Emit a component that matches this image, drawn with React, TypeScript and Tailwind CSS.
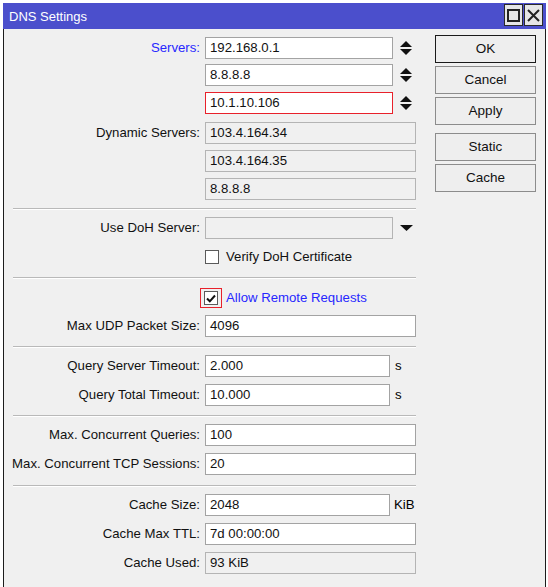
import type { ReactNode } from "react";

type Kind = "edit" | "disabled";

function Box({ value = "", kind = "edit", width, red }: { value?: string; kind?: Kind; width: string; red?: boolean }) {
  const bg = kind === "edit" ? "bg-white" : "bg-[#f0f0f0]";
  const border = red ? "border-[#e8212b]" : kind === "edit" ? "border-[#a3a3a3]" : "border-[#b4b4b4]";
  return (
    <div className={`h-[22px] ${width} ${bg} border ${border} flex items-center pl-[4px] text-[#111] whitespace-nowrap`}>
      {value}
    </div>
  );
}

function Row({ label, blue, top, children }: { label: string; blue?: boolean; top: string; children: ReactNode }) {
  return (
    <div className={`flex items-center h-[22px] ${top}`}>
      <div className={`w-[196px] text-right whitespace-nowrap ${blue ? "text-[#2727ff]" : "text-[#111]"}`}>{label}</div>
      <div className="ml-[5px] flex items-center">{children}</div>
    </div>
  );
}

function Sep({ top }: { top: string }) {
  return <div className={`${top} ml-[9px] w-[403px] h-[2px] border-t border-[#b9b9b9] border-b border-b-white`} />;
}

function Arrows() {
  return (
    <svg className="ml-[7px]" width="12" height="14" viewBox="0 0 12 14">
      <path d="M6 0 L12 6 L0 6 Z" fill="#111" />
      <path d="M0 8 L12 8 L6 14 Z" fill="#111" />
    </svg>
  );
}

function Btn({ label, primary, top }: { label: string; primary?: boolean; top: string }) {
  return (
    <div
      className={`${top} h-[28px] w-[101px] flex items-center justify-center text-[13.5px] text-[#111] bg-[#eeeeee] border ${
        primary ? "border-[#1a1a1a]" : "border-[#8c8c8c]"
      }`}
    >
      {label}
    </div>
  );
}

export default function App() {
  return (
    <div className="w-[548px] h-[587px] overflow-hidden bg-white pt-[3px] pl-[3px] font-['Liberation_Sans',Arial,sans-serif] text-[13.2px] leading-none">
      <div className="w-[543px] h-[600px] bg-[#f0f0f0] border-x border-[#1c1c1c]">
        {/* title bar */}
        <div className="h-[26px] -mx-px bg-[#4b4fcc] flex items-center justify-between pl-[6px] pr-[3px]">
          <span className="text-white text-[13px]">DNS Settings</span>
          <div className="flex gap-[1px] self-start mt-[1px]">
            <div className="w-[19px] h-[22px] bg-[#e6e6e6] border border-[#2a2a2a] flex items-center justify-center">
              <div className="w-[13px] h-[13px] border-2 border-[#222]" />
            </div>
            <div className="w-[19px] h-[22px] bg-[#e6e6e6] border border-[#2a2a2a] flex items-center justify-center">
              <svg width="13" height="13" viewBox="0 0 13 13">
                <path d="M1 1 L12 12 M12 1 L1 12" stroke="#222" strokeWidth="2" />
              </svg>
            </div>
          </div>
        </div>

        <div className="flex">
          <div className="w-[431px] pt-[8px]">
            <Row label="Servers:" blue top="">
              <Box value="192.168.0.1" width="w-[188px]" />
              <Arrows />
            </Row>
            <Row label="" top="mt-[5px]">
              <Box value="8.8.8.8" width="w-[188px]" />
              <Arrows />
            </Row>
            <Row label="" top="mt-[6px]">
              <Box value="10.1.10.106" width="w-[188px]" red />
              <Arrows />
            </Row>
            <Row label="Dynamic Servers:" top="mt-[8px]">
              <Box value="103.4.164.34" kind="disabled" width="w-[211px]" />
            </Row>
            <Row label="" top="mt-[6px]">
              <Box value="103.4.164.35" kind="disabled" width="w-[211px]" />
            </Row>
            <Row label="" top="mt-[6px]">
              <Box value="8.8.8.8" kind="disabled" width="w-[211px]" />
            </Row>

            <Sep top="mt-[8px]" />

            <Row label="Use DoH Server:" top="mt-[7px]">
              <Box kind="disabled" width="w-[188px]" />
              <svg className="ml-[7px]" width="13" height="6" viewBox="0 0 13 6">
                <path d="M0 0 L13 0 L6.5 6 Z" fill="#111" />
              </svg>
            </Row>
            <div className="mt-[11px] h-[13px] flex items-center">
              <div className="ml-[201px] w-[14px] h-[14px] bg-white border border-[#5a5a5a]" />
              <span className="ml-[7px] text-[#111]">Verify DoH Certificate</span>
            </div>

            <Sep top="mt-[14px]" />

            <div className="mt-[9px] h-[20px] flex items-center">
              <div className="ml-[196px] w-[22px] h-[20px] border border-[#e8212b] flex items-center justify-center">
                <div className="w-[14px] h-[14px] bg-white border border-[#5a5a5a] flex items-center justify-center">
                  <svg width="10" height="9" viewBox="0 0 10 9">
                    <path d="M1 4.5 L3.8 7.3 L9 1.5" fill="none" stroke="#111" strokeWidth="2" />
                  </svg>
                </div>
              </div>
              <span className="ml-[4px] text-[#2727ff]">Allow Remote Requests</span>
            </div>
            <Row label="Max UDP Packet Size:" top="mt-[7px]">
              <Box value="4096" width="w-[211px]" />
            </Row>

            <Sep top="mt-[9px]" />

            <Row label="Query Server Timeout:" top="mt-[7px]">
              <Box value="2.000" width="w-[185px]" />
              <span className="ml-[5px]">s</span>
            </Row>
            <Row label="Query Total Timeout:" top="mt-[7px]">
              <Box value="10.000" width="w-[185px]" />
              <span className="ml-[5px]">s</span>
            </Row>

            <Sep top="mt-[9px]" />

            <Row label="Max. Concurrent Queries:" top="mt-[7px]">
              <Box value="100" width="w-[211px]" />
            </Row>
            <Row label="Max. Concurrent TCP Sessions:" top="mt-[7px]">
              <Box value="20" width="w-[211px]" />
            </Row>

            <Sep top="mt-[10px]" />

            <Row label="Cache Size:" top="mt-[7px]">
              <Box value="2048" width="w-[185px]" />
              <span className="ml-[4px]">KiB</span>
            </Row>
            <Row label="Cache Max TTL:" top="mt-[7px]">
              <Box value="7d 00:00:00" width="w-[211px]" />
            </Row>
            <Row label="Cache Used:" top="mt-[7px]">
              <Box value="93 KiB" kind="disabled" width="w-[211px]" />
            </Row>
          </div>

          <div className="flex flex-col pt-[6px]">
            <Btn label="OK" primary top="" />
            <Btn label="Cancel" top="mt-[3px]" />
            <Btn label="Apply" top="mt-[3px]" />
            <Btn label="Static" top="mt-[8px]" />
            <Btn label="Cache" top="mt-[3px]" />
          </div>
        </div>
      </div>
    </div>
  );
}
